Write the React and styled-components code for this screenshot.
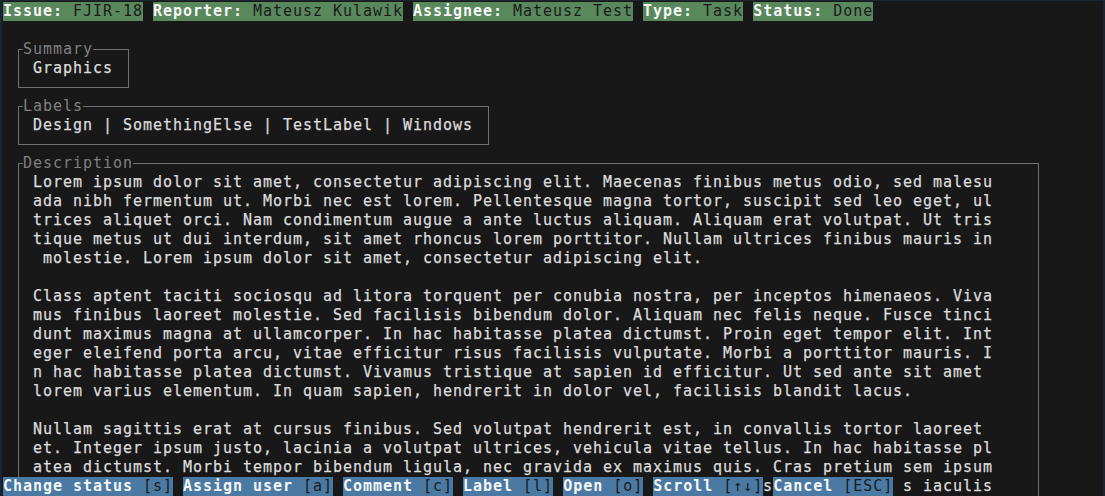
import React from "react";
import styled, { createGlobalStyle } from "styled-components";

const CELL = 10;

const Global = createGlobalStyle`
  html, body {
    margin: 0;
    padding: 0;
    background: #181818;
    overflow: hidden;
  }
`;

const Screen = styled.div`
  position: relative;
  box-sizing: border-box;
  width: 1105px;
  height: 496px;
  overflow: hidden;
  background: #181818;
  border-left: 2px solid #1b2630;
  border-right: 2px solid #1b2630;
  border-top: 1px solid #1b2630;
  padding: 1px 0 0 1px;
  font-family: "DejaVu Sans Mono", "Liberation Mono", monospace;
  font-size: 15px;
  line-height: 19px;
  letter-spacing: 0.97px;
  color: #dadada;
  -webkit-font-smoothing: antialiased;
`;

const Header = styled.div`
  display: flex;
  gap: ${CELL}px;
  height: 19px;
  margin-bottom: 19px;
`;

const Chip = styled.span`
  display: inline-block;
  height: 19px;
  white-space: pre;
  background: ${(p) => (p.$variant === "action" ? "#4a7aa4" : "#5a885d")};
`;

const ChipLabel = styled.span`
  color: #f6f6f6;
  font-weight: bold;
`;

const ChipValue = styled.span`
  color: #1a1a1a;
`;

const Panel = styled.fieldset`
  box-sizing: border-box;
  width: ${(p) => p.$cells * CELL + 1}px;
  min-width: 0;
  margin: 0 0 9px 15px;
  padding: 0 0 9px 4px;
  border: 1px solid #707070;
`;

const PanelTitle = styled.legend`
  padding: 0;
  color: #808080;
  line-height: 19px;
  height: 19px;
`;

const PanelBody = styled.div`
  margin-left: ${CELL}px;
`;

const Line = styled.div`
  display: flex;
  height: 19px;
  white-space: pre;
  color: #dcdcdc;
  -webkit-text-stroke: 0.25px #dcdcdc;
`;

/* A fragment of a line that starts a number of cells after the previous one. */
const Peek = styled.span`
  margin-left: ${(p) => p.$skip * CELL}px;
`;

const Footer = styled.div`
  position: absolute;
  left: 1px;
  bottom: 0;
  display: flex;
  gap: ${CELL}px;
  height: 19px;
`;

const headerItems = [
  ["Issue:", " FJIR-18"],
  ["Reporter:", " Mateusz Kulawik"],
  ["Assignee:", " Mateusz Test"],
  ["Type:", " Task"],
  ["Status:", " Done"],
];

const actions = [
  ["Change status", " [s]"],
  ["Assign user", " [a]"],
  ["Comment", " [c]"],
  ["Label", " [l]"],
  ["Open", " [o]"],
  ["Scroll", " [↑↓]"],
  ["Cancel", " [ESC]"],
];

const description = [
  "Lorem ipsum dolor sit amet, consectetur adipiscing elit. Maecenas finibus metus odio, sed malesu",
  "ada nibh fermentum ut. Morbi nec est lorem. Pellentesque magna tortor, suscipit sed leo eget, ul",
  "trices aliquet orci. Nam condimentum augue a ante luctus aliquam. Aliquam erat volutpat. Ut tris",
  "tique metus ut dui interdum, sit amet rhoncus lorem porttitor. Nullam ultrices finibus mauris in",
  " molestie. Lorem ipsum dolor sit amet, consectetur adipiscing elit.",
  "",
  "Class aptent taciti sociosqu ad litora torquent per conubia nostra, per inceptos himenaeos. Viva",
  "mus finibus laoreet molestie. Sed facilisis bibendum dolor. Aliquam nec felis neque. Fusce tinci",
  "dunt maximus magna at ullamcorper. In hac habitasse platea dictumst. Proin eget tempor elit. Int",
  "eger eleifend porta arcu, vitae efficitur risus facilisis vulputate. Morbi a porttitor mauris. I",
  "n hac habitasse platea dictumst. Vivamus tristique at sapien id efficitur. Ut sed ante sit amet",
  "lorem varius elementum. In quam sapien, hendrerit in dolor vel, facilisis blandit lacus.",
  "",
  "Nullam sagittis erat at cursus finibus. Sed volutpat hendrerit est, in convallis tortor laoreet",
  "et. Integer ipsum justo, lacinia a volutpat ultrices, vehicula vitae tellus. In hac habitasse pl",
  "atea dictumst. Morbi tempor bibendum ligula, nec gravida ex maximus quis. Cras pretium sem ipsum",
];

/* Row under the action bar: only the cells the bar leaves uncovered show through. */
const peeks = [
  { skip: 73, text: "s" },
  { skip: 13, text: "s iaculis" },
];

export default function App() {
  return (
    <>
      <Global />
      <Screen>
        <Header>
          {headerItems.map(([label, value]) => (
            <Chip key={label} $variant="info">
              <ChipLabel>{label}</ChipLabel>
              <ChipValue>{value}</ChipValue>
            </Chip>
          ))}
        </Header>

        <Panel $cells={11}>
          <PanelTitle>Summary</PanelTitle>
          <PanelBody>
            <Line>Graphics</Line>
          </PanelBody>
        </Panel>

        <Panel $cells={47}>
          <PanelTitle>Labels</PanelTitle>
          <PanelBody>
            <Line>Design | SomethingElse | TestLabel | Windows</Line>
          </PanelBody>
        </Panel>

        <Panel $cells={102}>
          <PanelTitle>Description</PanelTitle>
          <PanelBody>
            {description.map((text, i) => (
              <Line key={i}>{text || " "}</Line>
            ))}
            <Line>
              {peeks.map((p, i) => (
                <Peek key={i} $skip={p.skip}>
                  {p.text}
                </Peek>
              ))}
            </Line>
          </PanelBody>
        </Panel>

        <Footer>
          {actions.map(([label, key]) => (
            <Chip key={label} $variant="action">
              <ChipLabel>{label}</ChipLabel>
              <ChipValue>{key}</ChipValue>
            </Chip>
          ))}
        </Footer>
      </Screen>
    </>
  );
}
